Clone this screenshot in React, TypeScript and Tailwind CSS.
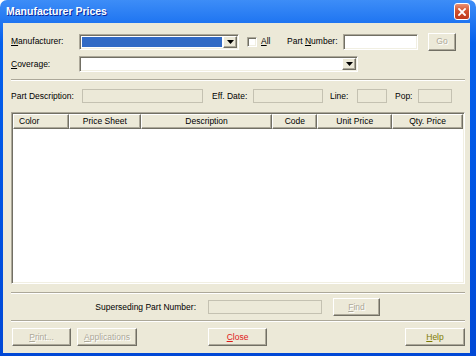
import React from 'react';

const font = { fontFamily: '"Liberation Sans", Arial, sans-serif' };

const sunken =
  'border border-t-[#aca899] border-l-[#aca899] border-b-white border-r-white shadow-[inset_1px_1px_0_#716f64,inset_-1px_-1px_0_#f1efe2]';
const raised =
  'border border-t-white border-l-white border-b-[#716f64] border-r-[#716f64] shadow-[inset_-1px_-1px_0_#aca899]';
const disabledBox = 'border border-[#c4c1b1] bg-[#ece9d8]';
const greyText = 'text-[#aca899] [text-shadow:1px_1px_0_#ffffff]';

function U({ children }: { children: React.ReactNode }) {
  return <span className="underline underline-offset-1">{children}</span>;
}

function Arrow() {
  return (
    <svg width="7" height="4" viewBox="0 0 7 4">
      <path d="M0 0h7L3.5 4z" fill="#000" />
    </svg>
  );
}

function Combo({ width, selected }: { width: string; selected?: boolean }) {
  return (
    <div className={`${width} h-[16px] ${sunken} flex bg-white p-[1px]`}>
      <div className={`flex-1 ${selected ? 'bg-[#316ac5] m-[1px]' : ''}`} />
      <div className={`w-[14px] h-full bg-[#ece9d8] ${raised} flex items-center justify-center`}>
        <Arrow />
      </div>
    </div>
  );
}

function Sep() {
  return <div className="ml-[8px] w-[454px] h-[2px] border-t border-t-[#aca899] border-b border-b-white" />;
}

function Btn({ w, ml, children, cls }: { w: string; ml: string; children: React.ReactNode; cls: string }) {
  return (
    <div className={`${w} ${ml} h-[18px] bg-[#ece9d8] ${raised} flex items-center justify-center ${cls}`}>
      {children}
    </div>
  );
}

const columns = [
  { name: 'Color', w: 'w-[56px]', left: true },
  { name: 'Price Sheet', w: 'w-[72px]' },
  { name: 'Description', w: 'w-[132px]' },
  { name: 'Code', w: 'w-[45px]' },
  { name: 'Unit Price', w: 'w-[75px]' },
  { name: 'Qty. Price', w: 'w-[71px]' },
];

export default function App() {
  return (
    <div
      className="w-[476px] h-[356px] rounded-t-[7px] bg-[linear-gradient(to_bottom,#3d8df7_0%,#0560ec_12%,#0054e3_55%,#0148d6_100%)] flex flex-col"
      style={font}
    >
      {/* Title bar */}
      <div className="h-[23px] flex items-center justify-between pl-[6px] pr-[6px]">
        <span className="text-white font-bold text-[10.5px] [text-shadow:1px_1px_0_#0a2a9c]">Manufacturer Prices</span>
        <div className="w-[16px] h-[17px] rounded-[3px] border border-white bg-[linear-gradient(to_bottom,#ea9072,#d1522e_45%,#c0391b)] flex items-center justify-center">
          <svg width="8" height="8" viewBox="0 0 8 8">
            <path d="M1 1L7 7M7 1L1 7" stroke="#fff" strokeWidth="1.8" strokeLinecap="square" />
          </svg>
        </div>
      </div>

      {/* Client area */}
      <div className="ml-[3px] mr-[6px] h-[330px] bg-[#ece9d8] flex flex-col text-[8.5px] text-black">
        {/* Manufacturer row */}
        <div className="mt-[9px] h-[19px] flex items-center pl-[8px]">
          <div className="w-[68px]">
            <U>M</U>anufacturer:
          </div>
          <Combo width="w-[160px]" selected />
          <div className="w-[48px] flex items-center">
            <div className={`ml-[8px] w-[10px] h-[10px] bg-white ${sunken}`} />
            <span className="ml-[4px]">
              <U>A</U>ll
            </span>
          </div>
          <div className="w-[56px]">
            Part <U>N</U>umber:
          </div>
          <div className={`w-[75px] h-[16px] bg-white ${sunken}`} />
          <Btn w="w-[28px]" ml="ml-[10px]" cls={greyText}>
            Go
          </Btn>
        </div>

        {/* Coverage row */}
        <div className="mt-[5px] h-[16px] flex items-center pl-[8px]">
          <div className="w-[68px]">
            <U>C</U>overage:
          </div>
          <Combo width="w-[279px]" />
        </div>

        <div className="mt-[7px]">
          <Sep />
        </div>

        {/* Part description row */}
        <div className="mt-[8px] h-[14px] flex items-center pl-[8px]">
          <div className="w-[71px]">Part Description:</div>
          <div className={`w-[121px] h-[14px] ${disabledBox}`} />
          <div className="ml-[9px] w-[41px]">Eff. Date:</div>
          <div className={`w-[70px] h-[14px] ${disabledBox}`} />
          <div className="ml-[7px] w-[27px]">Line:</div>
          <div className={`w-[30px] h-[14px] ${disabledBox}`} />
          <div className="ml-[8px] w-[23px]">Pop:</div>
          <div className={`w-[34px] h-[14px] ${disabledBox}`} />
        </div>

        {/* Table */}
        <div className={`mt-[9px] ml-[8px] w-[454px] h-[172px] bg-white ${sunken} p-[1px]`}>
          <div className="flex h-[15px]">
            {columns.map((c) => (
              <div
                key={c.name}
                className={`${c.w} h-full bg-[#ece9d8] ${raised} flex items-center ${c.left ? 'justify-start pl-[5px]' : 'justify-center'}`}
              >
                {c.name}
              </div>
            ))}
          </div>
        </div>

        <div className="mt-[8px]">
          <Sep />
        </div>

        {/* Superseding row */}
        <div className="mt-[4px] h-[18px] flex items-center">
          <div className="w-[205px] text-right pr-[12px]">Superseding Part Number:</div>
          <div className={`w-[114px] h-[14px] ${disabledBox}`} />
          <Btn w="w-[47px]" ml="ml-[11px]" cls={greyText}>
            <span>
              <U>F</U>ind
            </span>
          </Btn>
        </div>

        <div className="mt-[4px]">
          <Sep />
        </div>

        {/* Bottom buttons */}
        <div className="mt-[6px] flex items-center">
          <Btn w="w-[59px]" ml="ml-[9px]" cls={greyText}>
            <span>
              <U>P</U>rint...
            </span>
          </Btn>
          <Btn w="w-[60px]" ml="ml-[6px]" cls={greyText}>
            <span>
              <U>A</U>pplications
            </span>
          </Btn>
          <Btn w="w-[59px]" ml="ml-[71px]" cls="text-[#e01818]">
            <span>
              <U>C</U>lose
            </span>
          </Btn>
          <Btn w="w-[60px]" ml="ml-[138px]" cls="text-[#7d7a00]">
            <span>
              <U>H</U>elp
            </span>
          </Btn>
        </div>
      </div>
    </div>
  );
}
